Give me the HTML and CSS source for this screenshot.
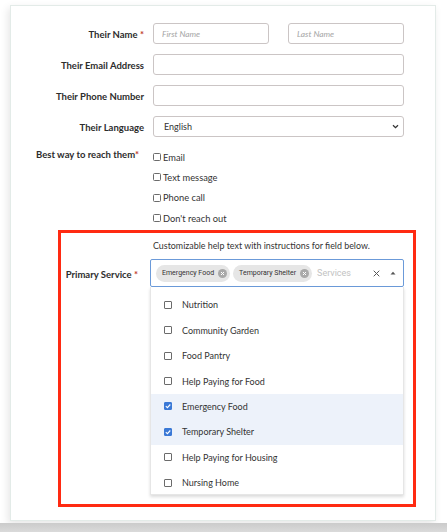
FILE: index.html
```html
<!DOCTYPE html>
<html>
<head>
<meta charset="utf-8">
<link rel="stylesheet" href="styles.css">
</head>
<body>
<div class="page">
  <div class="card">
    <form class="form">
      <label class="lbl">Their Name <span class="req">*</span></label>
      <div class="name-pair">
        <input class="inp" placeholder="First Name">
        <input class="inp" placeholder="Last Name">
      </div>
      <label class="lbl">Their Email Address</label>
      <input class="inp">
      <label class="lbl">Their Phone Number</label>
      <input class="inp">
      <label class="lbl">Their Language</label>
      <div class="select"><span>English</span>
        <svg class="chev" width="7" height="5" viewBox="0 0 7 5"><path d="M1 1.2 L3.5 3.6 L6 1.2" fill="none" stroke="#333" stroke-width="1.3"/></svg>
      </div>
      <label class="lbl lbl-top">Best way to reach them<span class="req">*</span></label>
      <div class="checks">
        <label class="chk"><span class="box"></span>Email</label>
        <label class="chk"><span class="box"></span>Text message</label>
        <label class="chk"><span class="box"></span>Phone call</label>
        <label class="chk"><span class="box"></span>Don't reach out</label>
      </div>
    </form>
    <div class="highlight">
      <p class="help">Customizable help text with instructions for field below.</p>
      <label class="lbl lbl-ps">Primary Service <span class="req">*</span></label>
      <div class="ms">
        <div class="ms-control">
          <span class="chip">Emergency Food<span class="chip-x"><svg width="5" height="5" viewBox="0 0 5 5"><path d="M1 1 L4 4 M4 1 L1 4" stroke="#fff" stroke-width="1"/></svg></span></span>
          <span class="chip">Temporary Shelter<span class="chip-x"><svg width="5" height="5" viewBox="0 0 5 5"><path d="M1 1 L4 4 M4 1 L1 4" stroke="#fff" stroke-width="1"/></svg></span></span>
          <span class="ms-ph">Services</span>
          <svg class="ms-clear" width="7" height="7" viewBox="0 0 7 7"><path d="M0.7 0.7 L6.3 6.3 M6.3 0.7 L0.7 6.3" stroke="#555" stroke-width="1"/></svg>
          <svg class="ms-caret" width="6" height="4" viewBox="0 0 6 4"><path d="M0.5 3.5 L3 0.8 L5.5 3.5 Z" fill="#555"/></svg>
        </div>
        <ul class="ms-menu">
          <li class="opt"><span class="obox"></span>Nutrition</li>
          <li class="opt"><span class="obox"></span>Community Garden</li>
          <li class="opt"><span class="obox"></span>Food Pantry</li>
          <li class="opt"><span class="obox"></span>Help Paying for Food</li>
          <li class="opt sel"><span class="obox on"><svg width="8" height="8" viewBox="0 0 8 8"><path d="M1.8 4.1 L3.4 5.6 L6.3 2.5" fill="none" stroke="#fff" stroke-width="1.1"/></svg></span>Emergency Food</li>
          <li class="opt sel"><span class="obox on"><svg width="8" height="8" viewBox="0 0 8 8"><path d="M1.8 4.1 L3.4 5.6 L6.3 2.5" fill="none" stroke="#fff" stroke-width="1.1"/></svg></span>Temporary Shelter</li>
          <li class="opt"><span class="obox"></span>Help Paying for Housing</li>
          <li class="opt"><span class="obox"></span>Nursing Home</li>
        </ul>
      </div>
    </div>
  </div>
</div>
<div class="band"></div>
</body>
</html>
```
FILE: styles.css
```css
* { box-sizing: border-box; }
html, body { margin: 0; padding: 0; }
body {
  background: #fff;
  font-family: Lato, "Liberation Sans", sans-serif;
  color: #2d2d2d;
  width: 447px;
  height: 532px;
  overflow: hidden;
}
.page { padding: 5px 11px 0 10px; }
.card {
  height: 516px;
  background: #fff;
  border: 1px solid #e3ebe8;
  box-shadow: -2px 3px 8px rgba(0,0,0,0.10);
  padding-top: 17px;
}
.form {
  display: grid;
  grid-template-columns: 133px 251px;
  column-gap: 9px;
  row-gap: 10px;
  align-items: center;
  margin: 0;
}
.lbl {
  font-weight: 700;
  font-size: 9.5px;
  line-height: 13px;
  padding-top: 1px;
  text-align: right;
  color: #2d2d2d;
}
.req { color: #c0392b; }
.inp {
  display: block;
  height: 21px;
  width: 100%;
  border: 1px solid #cbc5c5;
  border-radius: 3px;
  font-family: inherit;
  font-size: 9px;
  padding: 0 8px;
  background: #fff;
  margin: 0;
}
.inp::placeholder { color: #a5a5a5; font-style: italic; font-size: 8.4px; }
.name-pair { display: grid; grid-template-columns: 1fr 1fr; column-gap: 19px; }
.select {
  height: 21px;
  border: 1px solid #cbc5c5;
  border-radius: 3px;
  display: flex;
  align-items: center;
  justify-content: space-between;
  padding: 0 4px 0 10px;
  font-size: 9px;
  color: #333;
}
.lbl-top { align-self: start; line-height: 16px; padding-top: 0; padding-right: 5px; }
.checks { display: flex; flex-direction: column; }
.chk {
  height: 20.3px;
  display: flex;
  align-items: center;
  gap: 2px;
  font-size: 9.3px;
  color: #333;
}
.box {
  width: 8px;
  height: 8px;
  border: 1px solid #6b6b6b;
  border-radius: 1.5px;
  flex: none;
}
.highlight {
  margin: 2px 19px 0 47px;
  height: 277px;
  border: 3px solid #ff2a12;
  display: grid;
  grid-template-columns: 80px 254px;
  grid-template-rows: auto 1fr;
  column-gap: 9px;
  padding: 6px 8px 0 0;
}
.help {
  grid-column: 2;
  margin: 0 0 6px;
  padding-left: 3px;
  font-size: 8.9px;
  line-height: 14px;
  color: #333;
}
.lbl-ps { align-self: start; margin-top: 9px; line-height: 14px; padding-top: 0; padding-right: 3px; grid-column: 1; grid-row: 2; }
.ms { grid-column: 2; grid-row: 2; }
.ms-control {
  height: 28px;
  border: 1px solid #6b9ad9;
  border-radius: 2px;
  display: flex;
  align-items: center;
  gap: 3px;
  padding: 0 7px 0 5px;
  font-family: Roboto, sans-serif;
}
.chip {
  height: 17px;
  border-radius: 9px;
  background: #e6e6e6;
  display: flex;
  align-items: center;
  gap: 4px;
  padding: 0 3px 0 6px;
  font-size: 7px;
  color: #333;
}
.chip-x {
  width: 9px;
  height: 9px;
  border-radius: 50%;
  background: #a9a9a9;
  display: flex;
  align-items: center;
  justify-content: center;
}
.chip-x svg { display: block; }
.ms-ph { flex: 1; font-size: 9px; color: #c2c2c2; margin-left: 2px; }
.ms-clear { margin-right: 7px; }
.ms-caret { display: block; }
.ms-menu {
  list-style: none;
  margin: 0;
  padding: 5px 0 0;
  border: 1px solid #e6e6e6;
  border-top: none;
  box-shadow: 0 2px 3px rgba(0,0,0,0.14);
  height: 208px;
}
.opt {
  height: 25.4px;
  display: flex;
  align-items: center;
  gap: 10px;
  padding-left: 13px;
  font-size: 9px;
  color: #333;
}
.opt.sel { background: #edf2fa; }
.obox {
  width: 8px;
  height: 8px;
  border: 1px solid #6b6b6b;
  border-radius: 1px;
  flex: none;
  display: flex;
}
.obox.on { background: #3b79d6; border-color: #3b79d6; }
.obox.on svg { margin: -1px; }
.band {
  height: 9px;
  margin-top: 2px;
  background: linear-gradient(#cbcbcb, #dadada);
}
```
